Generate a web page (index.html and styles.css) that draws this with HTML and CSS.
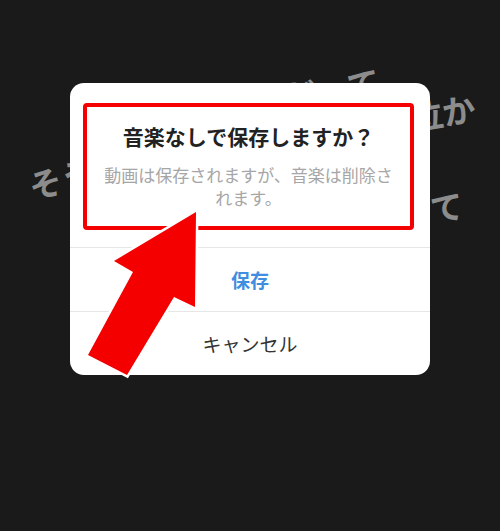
FILE: index.html
```html
<!DOCTYPE html>
<html lang="ja">
<head>
<meta charset="utf-8">
<link rel="stylesheet" href="styles.css">
</head>
<body>
<div class="screen">
  <div class="lyrics">
    <span class="word w1">そう</span>
    <span class="word w2">だって</span>
    <span class="word w3">泣か</span>
    <span class="word w4">って</span>
  </div>
  <div class="dialog">
    <div class="head">
      <div class="highlight">
        <h1 class="title">音楽なしで保存しますか？</h1>
        <p class="message">動画は保存されますが、音楽は削除されます。</p>
      </div>
    </div>
    <div class="btn save">保存</div>
    <div class="btn cancel">キャンセル</div>
  </div>
  <svg class="arrow" width="500" height="531" viewBox="0 0 500 531">
    <polygon points="196,212 114,261 133,272 88,355 127,375 174,297 195,307" fill="#f40000" stroke="#ffffff" stroke-width="5" stroke-linejoin="miter" paint-order="stroke"/>
  </svg>
</div>
</body>
</html>
```

FILE: styles.css
```css
* { box-sizing: border-box; }
html, body {
  margin: 0;
  padding: 0;
  background: #1a1a1a;
}
body {
  font-family: "Noto Sans CJK JP", "Noto Sans", sans-serif;
}
.screen {
  position: relative;
  width: 500px;
  height: 531px;
  overflow: hidden;
  background: #1a1a1a;
  padding-top: 83px;
  display: flex;
  flex-direction: column;
  align-items: center;
}
.lyrics {
  position: absolute;
  inset: 0;
}
.word {
  position: absolute;
  font-size: 33px;
  line-height: 33px;
  font-weight: 700;
  color: #8c8c8c;
  white-space: nowrap;
  transform-origin: left top;
}
.w1 { left: 25px; top: 171px; transform: rotate(-15deg); }
.w2 { left: 281px; top: 81px; transform: rotate(-10deg); }
.w3 { left: 407px; top: 102px; transform: rotate(-10deg); }
.w4 { left: 397px; top: 197px; transform: rotate(-8deg); }

.dialog {
  position: relative;
  z-index: 1;
  width: 360px;
  background: #ffffff;
  border-radius: 14px;
  overflow: hidden;
}
.head {
  padding: 20px 16px 17px 13px;
}
.highlight {
  border: 4px solid #f40000;
  border-radius: 4px;
  padding: 15px 10px 17px;
  text-align: center;
}
.title {
  margin: 0;
  font-size: 21px;
  line-height: 28px;
  font-weight: 700;
  color: #222222;
}
.message {
  margin: 13px 0 0;
  font-size: 17px;
  line-height: 23px;
  color: #a6a6a6;
}
.btn {
  height: 64px;
  border-top: 1px solid #e6e6e6;
  display: flex;
  align-items: center;
  justify-content: center;
  font-size: 19px;
}
.save {
  color: #3f8ee0;
  font-weight: 700;
}
.cancel {
  color: #333333;
}
.arrow {
  position: absolute;
  left: 0;
  top: 0;
  z-index: 2;
}
```
